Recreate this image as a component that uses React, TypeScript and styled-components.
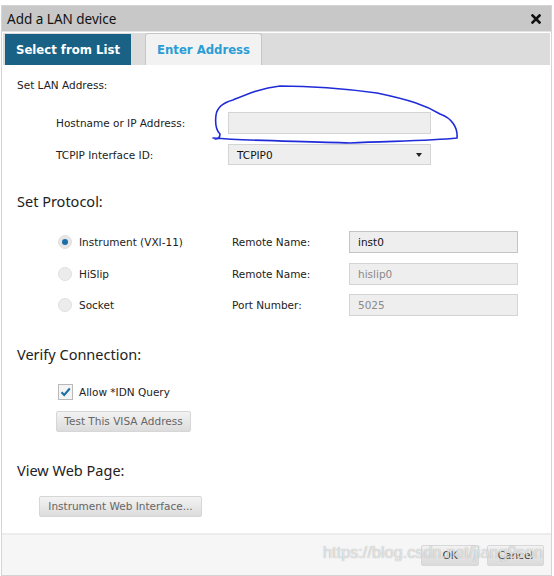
import React from "react";
import styled, { createGlobalStyle } from "styled-components";

const Global = createGlobalStyle`
  html, body { margin: 0; padding: 0; background: #ffffff; }
  body { width: 554px; height: 576px; overflow: hidden; }
`;

const UI = `"DejaVu Sans", Verdana, sans-serif`;
const HEAD = `"Noto Sans", "Open Sans", sans-serif`;

const Page = styled.div`
  position: relative;
  padding: 5px 2px 0 1px;
  width: 554px;
  height: 576px;
  box-sizing: border-box;
`;

const Dialog = styled.div`
  width: 551px;
  height: 571px;
  box-sizing: border-box;
  border: 1px solid #d4d4d4;
  display: flex;
  flex-direction: column;
  background: #fff;
`;

const TitleBar = styled.div`
  height: 25px;
  background: #c8c8c8;
  display: flex;
  align-items: center;
  justify-content: space-between;
  padding: 0 10px 0 5px;
  font-family: ${HEAD};
  font-size: 13.5px;
  color: #111;
  border-bottom: 1px solid #e4e4e4;
`;

const TabStrip = styled.div`
  height: 32px;
  margin: 1px 1px 0 1px;
  background: #dcdcdc;
  display: flex;
  align-items: flex-end;
  padding-left: 2px;
  gap: 14px;
`;

const Tab = styled.div<{ $active?: boolean }>`
  height: ${(p) => (p.$active ? 31 : 32)}px;
  box-sizing: border-box;
  padding: 0 ${(p) => (p.$active ? 11 : 11)}px;
  display: flex;
  align-items: center;
  font-family: ${UI};
  font-weight: bold;
  font-size: 11.7px;
  color: ${(p) => (p.$active ? "#ffffff" : "#2a9dd5")};
  background: ${(p) => (p.$active ? "#1a6285" : "#f2f2f2")};
  border: ${(p) => (p.$active ? "none" : "1px solid #c6c6c6")};
  border-bottom: none;
  border-radius: ${(p) => (p.$active ? "0" : "3px 3px 0 0")};
`;

const Content = styled.div`
  flex: 1;
  position: relative;
  padding: 13px 0 0 15px;
  font-family: ${UI};
  font-size: 10.5px;
  color: #222;
`;

const SmallHeader = styled.div`
  height: 14px;
  line-height: 14px;
`;

const Header = styled.div<{ $top: number }>`
  margin-top: ${(p) => p.$top}px;
  font-family: ${HEAD};
  font-size: 14.5px;
  color: #222;
  height: 20px;
  line-height: 20px;
`;

const FormGrid = styled.div`
  margin-top: 20px;
  margin-left: 39px;
  display: grid;
  grid-template-columns: 172px 203px;
  row-gap: 10px;
  align-items: center;
`;

const Field = styled.div<{ $muted?: boolean; $strong?: boolean }>`
  height: 22px;
  box-sizing: border-box;
  background: #eeeeee;
  border: 1px solid ${(p) => (p.$strong ? "#c4c4c4" : "#d4d4d4")};
  display: flex;
  align-items: center;
  justify-content: space-between;
  padding: 0 8px 0 8px;
  font-family: ${UI};
  font-size: 10.5px;
  color: ${(p) => (p.$muted ? "#8a8a8a" : "#111")};
`;

const Caret = styled.span`
  width: 0;
  height: 0;
  border-left: 3.5px solid transparent;
  border-right: 3.5px solid transparent;
  border-top: 4px solid #222;
`;

const ProtoList = styled.div`
  margin-top: 20px;
  margin-left: 41px;
  display: flex;
  flex-direction: column;
  gap: 10px;
`;

const ProtoRow = styled.div`
  height: 21.5px;
  display: grid;
  grid-template-columns: 21px 153px 117px 169px;
  align-items: center;
`;

const Radio = styled.span<{ $on?: boolean }>`
  width: 14px;
  height: 14px;
  border-radius: 50%;
  box-sizing: border-box;
  background: ${(p) => (p.$on ? "#e6e6e6" : "#ececec")};
  border: 1px solid #e0e0e0;
  display: flex;
  align-items: center;
  justify-content: center;
  &::after {
    content: "";
    display: ${(p) => (p.$on ? "block" : "none")};
    width: 6px;
    height: 6px;
    border-radius: 50%;
    background: #1a6ea6;
  }
`;

const CheckRow = styled.div`
  margin-top: 20px;
  margin-left: 41px;
  height: 16px;
  display: flex;
  align-items: center;
  gap: 6px;
`;

const CheckBox = styled.span`
  width: 15px;
  height: 16px;
  box-sizing: border-box;
  border: 1px solid #b9b9b9;
  background: #f4f4f4;
  display: flex;
  align-items: center;
  justify-content: center;
`;

const Button = styled.div<{ $left: number; $top: number; $width: number }>`
  margin-top: ${(p) => p.$top}px;
  margin-left: ${(p) => p.$left}px;
  width: ${(p) => p.$width}px;
  height: 21px;
  box-sizing: border-box;
  border: 1px solid #d6d6d6;
  border-radius: 2px;
  background: linear-gradient(#f3f3f3, #dcdcdc);
  display: flex;
  align-items: center;
  justify-content: center;
  font-family: ${UI};
  font-size: 10.5px;
  color: #666;
`;

const Footer = styled.div`
  height: 40px;
  border-top: 2px solid #ececec;
  background: #f6f6f6;
  display: flex;
  justify-content: flex-end;
  align-items: center;
  gap: 8px;
  padding-right: 7px;
  position: relative;
`;

const FooterButton = styled.div<{ $w: number }>`
  width: ${(p) => p.$w}px;
  height: 21px;
  box-sizing: border-box;
  border: 1px solid #d8d8d8;
  border-radius: 2px;
  background: linear-gradient(#f2f2f2, #dadada);
  display: flex;
  align-items: center;
  justify-content: center;
  font-family: ${UI};
  font-size: 10.5px;
  color: #444;
`;

const Watermark = styled.div`
  position: absolute;
  right: 8px;
  top: 8px;
  font-family: "Liberation Sans", Arial, sans-serif;
  font-size: 16.3px;
  color: rgba(255, 255, 255, 0.7);
  text-shadow: 0 0 1px rgba(110, 110, 110, 0.7);
  pointer-events: none;
`;

const Scribble = styled.svg`
  position: absolute;
  left: 0;
  top: 0;
  width: 554px;
  height: 576px;
  pointer-events: none;
`;

export default function App() {
  return (
    <>
      <Global />
      <Page>
        <Dialog>
          <TitleBar>
            <span>Add a LAN device</span>
            <svg width="10" height="10" viewBox="0 0 10 10" aria-label="close">
              <path d="M1.5 1.5 L8.5 8.5 M8.5 1.5 L1.5 8.5" stroke="#111" strokeWidth="2.6" strokeLinecap="square" />
            </svg>
          </TitleBar>
          <TabStrip>
            <Tab $active>Select from List</Tab>
            <Tab>Enter Address</Tab>
          </TabStrip>
          <Content>
            <SmallHeader>Set LAN Address:</SmallHeader>
            <FormGrid>
              <span>Hostname or IP Address:</span>
              <Field />
              <span>TCPIP Interface ID:</span>
              <Field style={{ height: 21 }}>
                TCPIP0
                <Caret />
              </Field>
            </FormGrid>

            <Header $top={26}>Set Protocol:</Header>
            <ProtoList>
              <ProtoRow>
                <Radio $on />
                <span>Instrument (VXI-11)</span>
                <span>Remote Name:</span>
                <Field $strong>inst0</Field>
              </ProtoRow>
              <ProtoRow>
                <Radio />
                <span>HiSlip</span>
                <span>Remote Name:</span>
                <Field $muted>hislip0</Field>
              </ProtoRow>
              <ProtoRow>
                <Radio />
                <span>Socket</span>
                <span>Port Number:</span>
                <Field $muted>5025</Field>
              </ProtoRow>
            </ProtoList>

            <Header $top={28}>Verify Connection:</Header>
            <CheckRow>
              <CheckBox>
                <svg width="11" height="10" viewBox="0 0 11 10">
                  <path d="M1.5 5.2 L4.2 8 L9.8 1.5" fill="none" stroke="#1a6ea6" strokeWidth="2" />
                </svg>
              </CheckBox>
              <span>Allow *IDN Query</span>
            </CheckRow>
            <Button $left={39} $top={11} $width={135}>Test This VISA Address</Button>

            <Header $top={28}>View Web Page:</Header>
            <Button $left={22} $top={16} $width={163}>Instrument Web Interface...</Button>
          </Content>
          <Footer>
            <FooterButton $w={58}>OK</FooterButton>
            <FooterButton $w={57}>Cancel</FooterButton>
            <Watermark>https://blog.csdn.net/jiang9son</Watermark>
          </Footer>
        </Dialog>
        <Scribble viewBox="0 0 554 576">
          <path
            d="M213 138 C 250 141, 300 141, 350 143 C 390 141, 430 141, 457 138 C 458 128, 452 118, 440 114 C 425 105, 410 100, 377 93 C 340 88, 310 86, 280 86 C 260 88, 245 95, 233 100 C 222 103, 217 108, 216 115 C 215 123, 216 130, 220 134 C 220 137, 218 139, 215 139"
            fill="none"
            stroke="#1f2bd8"
            strokeWidth="1.6"
            strokeLinecap="round"
          />
        </Scribble>
      </Page>
    </>
  );
}
